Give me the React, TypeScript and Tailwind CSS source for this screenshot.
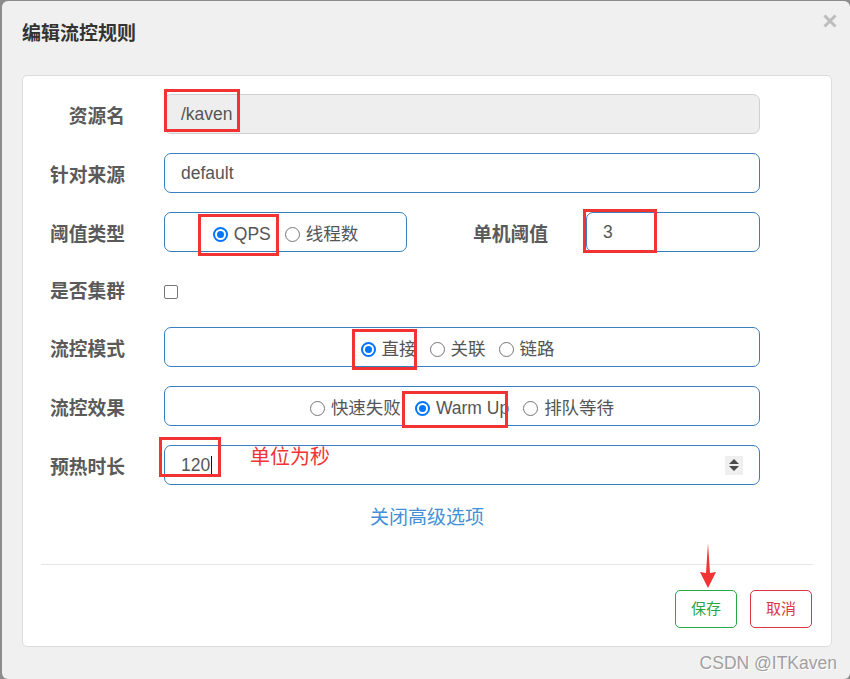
import React from "react";

const font = "font-['Liberation_Sans','Noto_Sans_CJK_SC',sans-serif]";

function Radio({ label, checked }: { label: string; checked?: boolean }) {
  return (
    <span className="flex items-center gap-[6px] pt-[4px]">
      {checked ? (
        <span className="flex h-[15px] w-[15px] items-center justify-center rounded-full border-2 border-[#0075ff] bg-white">
          <span className="h-[7px] w-[7px] rounded-full bg-[#0075ff]" />
        </span>
      ) : (
        <span className="h-[15px] w-[15px] rounded-full border border-[#767676] bg-white" />
      )}
      <span className="text-[17.5px] leading-[22px] text-[#555]">{label}</span>
    </span>
  );
}

function Label({ children, className = "" }: { children: React.ReactNode; className?: string }) {
  return (
    <div className={`pt-[6px] text-right text-[18.75px] font-bold text-[#5a5a5a] ${className}`}>{children}</div>
  );
}

function Row({ label, children, height = "h-[40px]" }: { label: string; children: React.ReactNode; height?: string }) {
  return (
    <div className={`flex items-center ${height}`}>
      <Label className="w-[102px]">{label}</Label>
      <div className="ml-[39px] flex h-full w-[596px] items-center">{children}</div>
    </div>
  );
}

const box = "h-[40px] rounded-[7px] border border-[#3a7ebf] bg-white";

export default function App() {
  return (
    <div className={`relative h-[679px] w-[850px] overflow-hidden bg-[#8c8c8c] pl-[2px] pt-[1px] ${font}`}>
      <div className="relative h-[678px] rounded-[6px] bg-[#f0f0f0] pl-[20px] pr-[18px]">
        {/* header */}
        <div className="h-[74px] pt-[21px]">
          <h4 className="text-[19px] font-bold leading-[24px] text-[#333]">编辑流控规则</h4>
        </div>
        <button className="absolute right-[13px] top-[13px] h-[14px] w-[14px]">
          <svg viewBox="0 0 14 14" className="h-[14px] w-[14px]">
            <path d="M1.5 1.5 L12.5 12.5 M12.5 1.5 L1.5 12.5" stroke="#bdbdbd" strokeWidth="3" />
          </svg>
        </button>

        {/* body */}
        <div className="rounded-[5px] border border-[#dcdcdc] bg-white pb-[18px] pt-[18px]">
          <div className="flex flex-col gap-[19px]">
            <Row label="资源名">
              <div className="flex h-[40px] w-full items-center rounded-[7px] border border-[#cfcfcf] bg-[#eeeeee] pl-[16px] text-[17.5px] text-[#555]">
                /kaven
              </div>
            </Row>
            <Row label="针对来源">
              <div className={`${box} flex w-full items-center pl-[16px] text-[17.5px] text-[#555]`}>default</div>
            </Row>
            <Row label="阈值类型">
              <div className={`${box} flex w-[243px] items-center justify-center gap-[14px]`}>
                <Radio label="QPS" checked />
                <Radio label="线程数" />
              </div>
              <Label className="w-[141px]">单机阈值</Label>
              <div className={`${box} ml-[38px] flex w-[174px] items-center pl-[16px] text-[17.5px] text-[#555]`}>3</div>
            </Row>
            <Row label="是否集群" height="h-[37px]">
              <span className="mt-[4px] h-[14px] w-[14px] rounded-[2px] border border-[#767676] bg-white" />
            </Row>
            <Row label="流控模式">
              <div className={`${box} flex w-full items-center justify-center gap-[13px] pr-[9px]`}>
                <Radio label="直接" checked />
                <Radio label="关联" />
                <Radio label="链路" />
              </div>
            </Row>
            <Row label="流控效果">
              <div className={`${box} flex w-full items-center justify-center gap-[14px]`}>
                <Radio label="快速失败" />
                <Radio label="Warm Up" checked />
                <Radio label="排队等待" />
              </div>
            </Row>
            <Row label="预热时长">
              <div className={`${box} flex w-full items-center pl-[16px] pr-[16px] text-[17.5px] text-[#555]`}>
                <span>120</span>
                <span className="ml-[1px] h-[19px] w-[1px] bg-[#111]" />
                <span className="ml-auto flex h-[19px] w-[18px] flex-col items-center justify-center gap-[2px] bg-[#efefef]">
                  <svg viewBox="0 0 10 12" className="h-[12px] w-[10px]">
                    <path d="M5 0 L10 5 L0 5 Z M0 7 L10 7 L5 12 Z" fill="#4a4a4a" />
                  </svg>
                </span>
              </div>
            </Row>
          </div>

          <div className="mt-[21px] text-center text-[19px] leading-[24px] text-[#4490d6]">关闭高级选项</div>

          <div className="mx-[18px] mt-[34px] h-px bg-[#e5e5e5]" />

          <div className="mr-[19px] mt-[25px] flex justify-end gap-[13px]">
            <button className="h-[38px] w-[62px] rounded-[5px] border border-[#28a745] bg-white text-[15px] text-[#28a745]">
              保存
            </button>
            <button className="h-[38px] w-[62px] rounded-[5px] border border-[#dc3545] bg-white text-[15px] text-[#dc3545]">
              取消
            </button>
          </div>
        </div>

        <div className="absolute bottom-[6px] right-[13px] text-[17.5px] leading-[20px] text-[#a0a0a0] [text-shadow:1px_1px_0_#ffffff]">
          CSDN @ITKaven
        </div>
      </div>

      {/* screenshot annotations drawn over the dialog */}
      <div className="pointer-events-none absolute inset-0">
        <div className="absolute left-[164px] top-[89px] h-[43px] w-[76px] border-[3px] border-[#f23333]" />
        <div className="absolute left-[198px] top-[214px] h-[42px] w-[81px] border-[3px] border-[#f23333]" />
        <div className="absolute left-[583px] top-[209px] h-[44px] w-[74px] border-[3px] border-[#f23333]" />
        <div className="absolute left-[352px] top-[329px] h-[41px] w-[65px] border-[3px] border-[#f23333]" />
        <div className="absolute left-[402px] top-[391px] h-[37px] w-[106px] border-[3px] border-[#f23333]" />
        <div className="absolute left-[159px] top-[437px] h-[40px] w-[62px] border-[3px] border-[#f23333]" />
        <div className="absolute left-[250px] top-[445px] text-[20px] leading-[24px] text-[#f23333]">单位为秒</div>
        <svg className="absolute left-[698px] top-[541px] h-[50px] w-[20px]" viewBox="0 0 20 50">
          <path d="M10 2 L12 32 L18 31 L10 47 L2 31 L8 32 Z" fill="#f23333" />
        </svg>
      </div>
    </div>
  );
}
